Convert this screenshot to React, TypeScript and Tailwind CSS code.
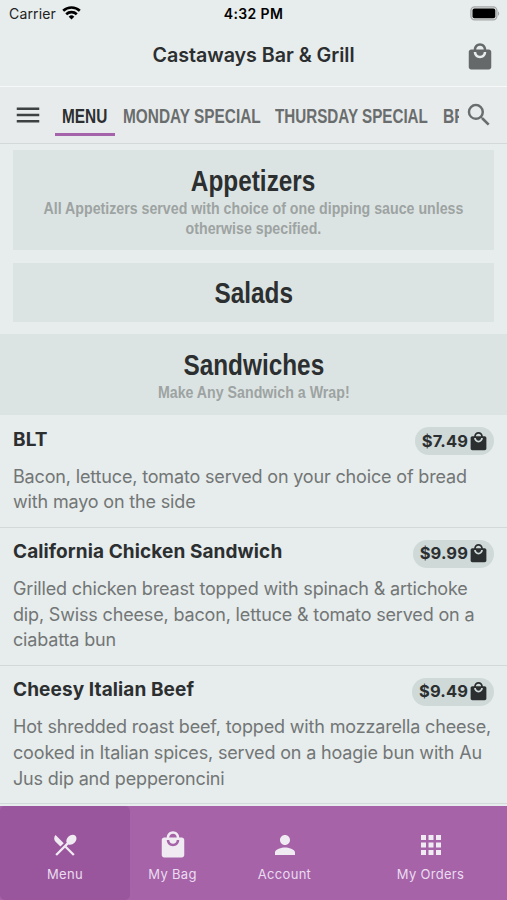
import React from 'react';
import { MdApps, MdLocalMall, MdMenu, MdPerson, MdRestaurantMenu, MdSearch } from 'react-icons/md';

interface MenuItem {
  name: string;
  price: string;
  lines: string[];
}

const ITEMS: MenuItem[] = [
  {
    name: 'BLT',
    price: '$7.49',
    lines: ['Bacon, lettuce, tomato served on your choice of bread', 'with mayo on the side'],
  },
  {
    name: 'California Chicken Sandwich',
    price: '$9.99',
    lines: [
      'Grilled chicken breast topped with spinach & artichoke',
      'dip, Swiss cheese, bacon, lettuce & tomato served on a',
      'ciabatta bun',
    ],
  },
  {
    name: 'Cheesy Italian Beef',
    price: '$9.49',
    lines: [
      'Hot shredded roast beef, topped with mozzarella cheese,',
      'cooked in Italian spices, served on a hoagie bun with Au',
      'Jus dip and pepperoncini',
    ],
  },
];

const StatusBar: React.FC = () => (
  <div className="grid h-7 grid-cols-3 items-center pl-[9px] pr-[7px] text-[14px] text-[#222]">
    <div className="flex items-center gap-[6px]">
      <span className="-mt-px tracking-[0.15px]">Carrier</span>
      <svg className="-mt-[2px]" width="19" height="14" viewBox="0 0 19 14" fill="none" stroke="#000" strokeWidth="2.6">
        <path d="M1.2 4.8a12 12 0 0 1 16.6 0" />
        <path d="M4.2 8.2a7.7 7.7 0 0 1 10.6 0" />
        <path d="M9.5 13.6 6.7 10.7a4 4 0 0 1 5.6 0z" fill="#000" stroke="none" />
      </svg>
    </div>
    <span className="-ml-[2px] -mt-px text-center font-semibold tracking-[0.35px] text-black">4:32 PM</span>
    <svg className="-mt-[2px] justify-self-end" width="30" height="15" viewBox="0 0 30 15">
      <rect x="0.9" y="0.9" width="26" height="13" rx="3.8" fill="#dcdfdf" stroke="#a5a8a8" strokeWidth="1.3" />
      <rect x="2.5" y="2.5" width="22.8" height="9.8" rx="2" fill="#000" />
      <path d="M28 5.2c1.6.8 1.6 3.8 0 4.6z" fill="#a5a8a8" />
    </svg>
  </div>
);

const Tabs: React.FC = () => (
  <div className="flex h-[57px] items-center border-b border-[#d3d8d8] bg-[#e7ebec] pl-[13px] pr-[13px] font-['Liberation_Sans',sans-serif] text-[20px] font-bold text-[#6a6d6d]">
    <MdMenu className="size-[30px] shrink-0 text-[#3e4142]" />
    <div className="ml-3 flex min-w-0 flex-1 self-stretch overflow-hidden whitespace-nowrap leading-[42px]">
      <div className="mt-2 h-[41px] w-[60px] shrink-0 border-b-[3.5px] border-[#a564a9] pl-[7px] text-[#2c2f30]">
        <span className="inline-block origin-left scale-x-[0.77]">MENU</span>
      </div>
      <div className="ml-[7.5px] mt-2 w-[138px] shrink-0">
        <span className="inline-block origin-left scale-x-[0.77]">MONDAY SPECIAL</span>
      </div>
      <div className="ml-[14px] mt-2 w-[153px] shrink-0">
        <span className="inline-block origin-left scale-x-[0.76]">THURSDAY SPECIAL</span>
      </div>
      <div className="ml-[15px] mt-2">
        <span className="inline-block origin-left scale-x-[0.78]">BREAKFAST</span>
      </div>
    </div>
    <MdSearch className="ml-[5px] size-[30px] shrink-0" />
  </div>
);

const Category: React.FC<{ title: string; className: string; children?: React.ReactNode }> = ({
  title,
  className,
  children,
}) => (
  <div
    className={`flex flex-col items-center whitespace-nowrap bg-[#dce4e3] text-center font-['Liberation_Sans',sans-serif] font-bold ${className}`}
  >
    <h2 className="scale-x-[0.84] text-[29px] leading-[34px] text-[#2c2f30]">{title}</h2>
    {children && <p className="mt-[0.6px] scale-x-[0.835] text-[17px] leading-[20.5px] text-[#9da3a2]">{children}</p>}
  </div>
);

const ItemRow: React.FC<{ item: MenuItem }> = ({ item }) => (
  <div className="border-b border-[#d3d8d8] px-[13px] pb-[11.6px] pt-3">
    <div className="flex h-7 items-center justify-between">
      <h3 className="-mt-[2px] text-[19px] font-bold tracking-[0.1px] text-[#2c2f30]">{item.name}</h3>
      <div className="flex h-7 items-center rounded-full bg-[#cfd9d8] pl-[7px] pr-[5px] text-[#2c2f30]">
        <span className="text-[16.5px] font-bold tracking-[0.1px]">{item.price}</span>
        <MdLocalMall className="size-[21px]" />
      </div>
    </div>
    <p className="mt-[8.5px] whitespace-nowrap text-[18px] leading-[25.7px] tracking-[-0.16px] text-[#727676]">
      {item.lines.map((line) => (
        <span key={line} className="block">
          {line}
        </span>
      ))}
    </p>
  </div>
);

const BottomNav: React.FC = () => (
  <div className="flex h-[94px] shrink-0 bg-[#a663a8] text-[13px] tracking-[0.3px] text-[#eadcf0]">
    <div className="flex w-[130px] flex-col items-center rounded-[5px] bg-[#9a569c] pt-[25px]">
      <MdRestaurantMenu className="size-7 text-[#f0eaf3]" />
      <span className="mt-[6px]">Menu</span>
    </div>
    <div className="flex w-[85px] flex-col items-center pt-[24px]">
      <MdLocalMall className="size-[30px] text-[#f0eaf3]" />
      <span className="mt-[5px]">My Bag</span>
    </div>
    <div className="flex w-[139px] flex-col items-center pt-[24px]">
      <MdPerson className="size-[30px] text-[#f0eaf3]" />
      <span className="mt-[5px]">Account</span>
    </div>
    <div className="flex w-[153px] flex-col items-center pt-[24px]">
      <MdApps className="size-[30px] text-[#f0eaf3]" />
      <span className="mt-[5px]">My Orders</span>
    </div>
  </div>
);

const App: React.FC = () => {
  return (
    <div className="flex h-[900px] w-[507px] flex-col overflow-hidden bg-[#e7ecec] font-['Inter',sans-serif]">
      <StatusBar />
      <div className="grid h-[59px] shrink-0 grid-cols-[40px_1fr_40px] items-center border-b border-[#f7f9f9] px-[11px]">
        <h1 className="col-start-2 -mt-[3px] text-center text-[19.7px] font-semibold tracking-[-0.05px] text-[#2c2f30]">
          Castaways Bar & Grill
        </h1>
        <MdLocalMall className="mr-px size-[30px] justify-self-end text-[#666969]" />
      </div>
      <Tabs />

      <div className="min-h-0 flex-1 overflow-hidden">
        <Category title="Appetizers" className="mx-[13px] mt-[6px] h-[100px] pt-[14px]">
          All Appetizers served with choice of one dipping sauce unless
          <br />
          otherwise specified.
        </Category>
        <Category title="Salads" className="mx-[13px] mt-[13px] h-[59px] pt-[13px]" />
        <Category title="Sandwiches" className="mt-[12px] h-[81px] pt-[14px]">
          Make Any Sandwich a Wrap!
        </Category>
        {ITEMS.map((item) => (
          <ItemRow key={item.name} item={item} />
        ))}
      </div>

      <BottomNav />
    </div>
  );
};

export default App;
